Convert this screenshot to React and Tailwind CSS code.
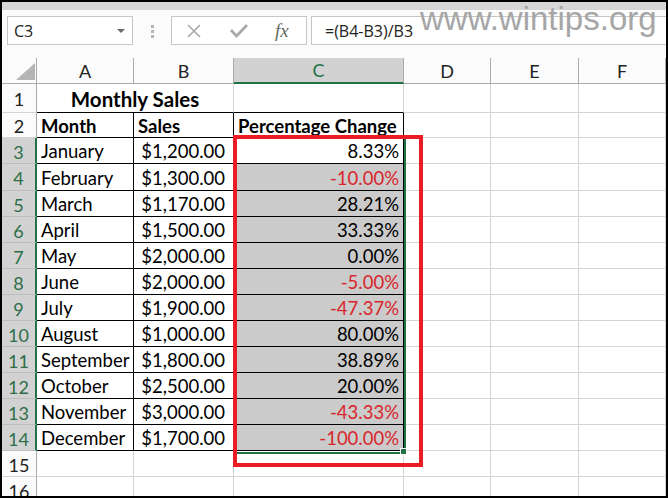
import React from 'react';

const COLS = 'grid grid-cols-[35px_97px_100px_170px_87px_88px_87px]';

const rows = [
  ['January', '$1,200.00', '8.33%'],
  ['February', '$1,300.00', '-10.00%'],
  ['March', '$1,170.00', '28.21%'],
  ['April', '$1,500.00', '33.33%'],
  ['May', '$2,000.00', '0.00%'],
  ['June', '$2,000.00', '-5.00%'],
  ['July', '$1,900.00', '-47.37%'],
  ['August', '$1,000.00', '80.00%'],
  ['September', '$1,800.00', '38.89%'],
  ['October', '$2,500.00', '20.00%'],
  ['November', '$3,000.00', '-43.33%'],
  ['December', '$1,700.00', '-100.00%'],
];

function FormulaBar() {
  return (
    <div className="h-[48px] bg-[#fbfbfb] flex items-start pt-[6px] pl-[5px] font-['Open_Sans',sans-serif] text-[16px] text-[#222]">
      <div className="w-[126px] h-[29px] border border-[#c6c6c6] bg-white flex items-center justify-between pl-[6px] pr-[7px]">
        <span>C3</span>
        <svg width="8" height="4" viewBox="0 0 8 4">
          <polygon points="0,0 8,0 4,4" fill="#6b6b6b" />
        </svg>
      </div>
      <div className="ml-[18px] mt-[9px] flex flex-col gap-[2px]">
        <div className="w-[3px] h-[3px] bg-[#b4b4b4]" />
        <div className="w-[3px] h-[3px] bg-[#b4b4b4]" />
        <div className="w-[3px] h-[3px] bg-[#b4b4b4]" />
      </div>
      <div className="ml-[17px] w-[136px] h-[29px] border border-[#c6c6c6] bg-white flex items-center pl-[15px]">
        <svg width="14" height="14" viewBox="0 0 14 14">
          <path d="M1 1 L13 13 M13 1 L1 13" stroke="#a8a8a8" strokeWidth="1.6" fill="none" />
        </svg>
        <svg className="ml-[29px]" width="18" height="14" viewBox="0 0 18 14">
          <path d="M1 6 L6.5 12 L17 1" stroke="#a8a8a8" strokeWidth="2.6" fill="none" />
        </svg>
        <span className="ml-[27px] font-['Liberation_Serif',serif] italic text-[19px] text-[#5f6b63] leading-none">
          fx
        </span>
      </div>
      <div className="ml-[4px] flex-1 h-[29px] border border-r-0 border-[#c6c6c6] bg-white flex items-center pl-[13px]">
        =(B4-B3)/B3
      </div>
    </div>
  );
}

function HeaderRow() {
  const hdr = 'flex items-center justify-center border-r border-b border-[#ababab]';
  return (
    <div className={`${COLS} h-[26px] bg-[#fbfbfb] text-[#222] text-[18px]`}>
      <div className="flex items-end justify-end pr-[1px] pb-[3px] border-r border-b border-[#ababab]">
        <svg width="19" height="17" viewBox="0 0 19 17">
          <polygon points="19,0 19,17 0,17" fill="#b5b5b5" />
        </svg>
      </div>
      <div className={hdr}>A</div>
      <div className={hdr}>B</div>
      <div className="flex items-center justify-center bg-[#d2d2d2] text-[#217346] border-r border-r-[#ababab] border-b-2 border-b-[#217346]">
        C
      </div>
      <div className={hdr}>D</div>
      <div className={hdr}>E</div>
      <div className={hdr}>F</div>
    </div>
  );
}

const rowHead =
  'flex items-center justify-center pt-[2px] bg-[#fbfbfb] text-[#222] text-[18px] border-r border-r-[#ababab] border-b border-b-[#d4d4d4]';
const rowHeadSel =
  'flex items-center justify-center pt-[2px] bg-[#d2d2d2] text-[#2d6e48] text-[18px] border-r-2 border-r-[#217346] border-b border-b-[#bdbdbd]';
const grid = 'border-r border-b border-[#d4d4d4]';

export default function App() {
  return (
    <div className="w-[668px] h-[498px] border-2 border-black bg-white overflow-hidden relative font-['Lato',sans-serif] text-[18.5px] leading-none">
      <div className="h-[8px] bg-[#d6d6d6]" />
      <FormulaBar />
      <HeaderRow />

      {/* row 1 */}
      <div className={`${COLS} h-[29px]`}>
        <div className={rowHead}>1</div>
        <div className="col-span-2 flex items-center justify-center pt-[2px] font-bold text-[20.5px] border-r border-r-[#d4d4d4] border-b border-b-black">
          Monthly Sales
        </div>
        <div className="border-r border-r-[#d4d4d4] border-b border-b-black" />
        <div className={grid} />
        <div className={grid} />
        <div className={grid} />
      </div>

      {/* row 2 */}
      <div className={`${COLS} h-[25px]`}>
        <div className={rowHead}>2</div>
        <div className="flex items-center pl-[4px] pt-[2px] font-bold border-r border-b border-black">Month</div>
        <div className="flex items-center pl-[4px] pt-[2px] font-bold border-r border-b border-black">Sales</div>
        <div className="flex items-center pl-[4px] pt-[2px] font-bold border-r border-b border-black">
          Percentage Change
        </div>
        <div className={grid} />
        <div className={grid} />
        <div className={grid} />
      </div>

      {rows.map(([month, sales, pct], i) => (
        <div key={month} className={`${COLS} ${i === 1 ? 'h-[27px]' : 'h-[26px]'}`}>
          <div className={rowHeadSel}>{i + 3}</div>
          <div className="flex items-center pl-[4px] pt-[2px] border-r border-b border-black">{month}</div>
          <div className="flex items-center justify-end pr-[8px] pt-[2px] border-r border-b border-black">{sales}</div>
          <div
            className={`flex items-center justify-end pr-[4px] pt-[2px] border-r border-b border-black ${
              i === 0 ? 'bg-white' : 'bg-[#cbcbcb]'
            } ${pct.startsWith('-') ? 'text-[#d9262b]' : 'text-black'}`}
          >
            {pct}
          </div>
          <div className={grid} />
          <div className={grid} />
          <div className={grid} />
        </div>
      ))}

      {[15, 16].map((n) => (
        <div key={n} className={`${COLS} h-[26px]`}>
          <div className={rowHead}>{n}</div>
          <div className={grid} />
          <div className={grid} />
          <div className={grid} />
          <div className={grid} />
          <div className={grid} />
          <div className={grid} />
        </div>
      ))}

      {/* selection outline + fill handle */}
      <div className="absolute left-[231px] top-[135px] w-[173px] h-[317px] border-2 border-[#217346]" />
      <div className="absolute left-[398px] top-[446px] w-[7px] h-[7px] bg-[#217346] border border-white" />

      {/* red annotation box */}
      <div className="absolute left-[231px] top-[133px] w-[190px] h-[332px] border-4 border-[#ec1c24]" />

      {/* watermark */}
      <div className="absolute left-[418px] top-0 font-['Liberation_Sans',sans-serif] text-[33px] text-[#a6a6a6] leading-none">
        www.wintips.org
      </div>
    </div>
  );
}
